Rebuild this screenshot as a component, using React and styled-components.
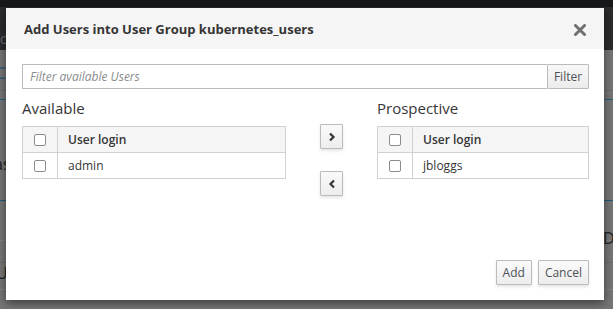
import React from 'react';
import styled, { createGlobalStyle } from 'styled-components';

const GlobalStyle = createGlobalStyle`
  html, body {
    margin: 0;
    padding: 0;
    width: 613px;
    height: 309px;
    overflow: hidden;
    font-family: "Open Sans", "Noto Sans", sans-serif;
    font-size: 12px;
    color: #363636;
  }
`;

const Page = styled.div`
  position: relative;
  width: 613px;
  height: 309px;
  background: #767676;
  overflow: hidden;
`;

const NavTop = styled.div`
  height: 7px;
  background: #17181a;
`;

const NavBar = styled.div`
  height: 43px;
  background: #292b2d;
  color: #6a6a6a;
  font-size: 14px;
  padding: 22px 0 0 0;
  box-sizing: border-box;
`;

const PageLine = styled.div`
  position: absolute;
  left: 0;
  right: 0;
  top: ${(p) => p.top}px;
  height: 1px;
  background: ${(p) => p.color || '#6a6a6a'};
`;

const PageText = styled.div`
  position: absolute;
  top: ${(p) => p.top}px;
  left: ${(p) => p.left}px;
  font-size: 16px;
  color: ${(p) => p.color || '#222'};
`;

const Modal = styled.div`
  position: absolute;
  left: 6px;
  top: 8px;
  width: 598px;
  height: 292px;
  background: #fff;
  box-shadow: 0 3px 9px rgba(0, 0, 0, 0.5);
  display: flex;
  flex-direction: column;
`;

const Header = styled.div`
  height: 41px;
  background: #f5f5f5;
  display: flex;
  align-items: center;
  justify-content: space-between;
  padding: 0 18px 0 18px;
  box-sizing: border-box;
`;

const Title = styled.h4`
  margin: 0;
  font-size: 13px;
  font-weight: 700;
  color: #363636;
`;

const Close = styled.button`
  border: 0;
  background: none;
  padding: 0;
  margin-top: 3px;
  display: flex;
  cursor: pointer;
`;

const Body = styled.div`
  flex: 1;
  padding: 15px 15px 0 16px;
`;

const FilterRow = styled.div`
  display: flex;
  height: 25px;
`;

const FilterInput = styled.input`
  flex: 1;
  border: 1px solid #bbb;
  border-right: 0;
  padding: 0 7px;
  font-family: inherit;
  font-size: 12px;
  outline: none;
  &::placeholder {
    color: #8b8d8f;
    font-style: italic;
  }
`;

const Button = styled.button`
  height: ${(p) => p.h || 25}px;
  padding: 0 ${(p) => p.px ?? 6}px;
  border: 1px solid #bbb;
  border-radius: 1px;
  background: linear-gradient(#fafafa, #ededed);
  box-shadow: 0 2px 3px rgba(3, 3, 3, 0.1);
  font-family: inherit;
  font-size: 12px;
  color: #4d5258;
  display: flex;
  align-items: center;
  justify-content: center;
  cursor: pointer;
`;

const FilterButton = styled(Button)`
  width: 42px;
  box-shadow: none;
  background: linear-gradient(#f7f7f7, #ececec);
`;

const Columns = styled.div`
  display: grid;
  grid-template-columns: 264px 91px 212px;
  margin-top: 9px;
`;

const Column = styled.div`
  display: flex;
  flex-direction: column;
  align-items: ${(p) => (p.center ? 'center' : 'stretch')};
`;

const Label = styled.div`
  font-size: 15px;
  line-height: 20px;
  color: #363636;
  margin-bottom: 8px;
`;

const Table = styled.div`
  border: 1px solid #d1d1d1;
  display: flex;
  flex-direction: column;
`;

const Row = styled.div`
  display: grid;
  grid-template-columns: 34px 1fr;
  height: 25px;
  background: ${(p) => (p.head ? '#f5f5f5' : '#fff')};
  font-weight: ${(p) => (p.head ? 600 : 400)};
  & + & {
    border-top: 1px solid #d1d1d1;
  }
`;

const Cell = styled.div`
  display: flex;
  align-items: center;
  padding-left: ${(p) => (p.check ? 0 : 10)}px;
  justify-content: ${(p) => (p.check ? 'center' : 'flex-start')};
  border-left: ${(p) => (p.check ? '0' : '1px solid #d1d1d1')};
`;

const Check = styled.span`
  width: 10px;
  height: 10px;
  border: 1px solid #8b8d8f;
  border-radius: 2px;
  background: #fff;
  display: block;
`;

const MoveButtons = styled.div`
  margin-top: 26px;
  display: flex;
  flex-direction: column;
  gap: 22px;
`;

const Footer = styled.div`
  display: flex;
  justify-content: flex-end;
  gap: 6px;
  padding: 0 15px 15px 0;
`;

function Chevron({ dir }) {
  return (
    <svg width="8" height="10" viewBox="0 0 8 10">
      <path
        d={dir === 'right' ? 'M2 1.5 L5.5 5 L2 8.5' : 'M6 1.5 L2.5 5 L6 8.5'}
        fill="none"
        stroke="#363636"
        strokeWidth="2.2"
      />
    </svg>
  );
}

function UserTable({ users }) {
  return (
    <Table>
      <Row head>
        <Cell check>
          <Check />
        </Cell>
        <Cell>User login</Cell>
      </Row>
      {users.map((u) => (
        <Row key={u}>
          <Cell check>
            <Check />
          </Cell>
          <Cell>{u}</Cell>
        </Row>
      ))}
    </Table>
  );
}

export default function App() {
  return (
    <Page>
      <GlobalStyle />
      <NavTop />
      <NavBar>c</NavBar>
      <PageText top={62} left={-4} color="#1d5a7a">C</PageText>
      <PageLine top={99} color="#22607f" />
      <PageText top={153} left={-6}>as</PageText>
      <PageLine top={200} color="#1f5b79" />
      <PageLine top={90} color="#6b6b6b" />
      <PageLine top={240} color="#838383" />
      <PageText top={227} left={603}>D</PageText>
      <PageLine top={262} color="#6a6a6a" />
      <PageText top={262} left={-4}>U</PageText>
      <PageLine top={289} color="#838383" />

      <Modal>
        <Header>
          <Title>Add Users into User Group kubernetes_users</Title>
          <Close aria-label="Close">
            <svg width="12" height="12" viewBox="0 0 12 12">
              <path d="M1.5 1.5 L10.5 10.5 M10.5 1.5 L1.5 10.5" stroke="#707070" strokeWidth="3" strokeLinecap="round" />
            </svg>
          </Close>
        </Header>
        <Body>
          <FilterRow>
            <FilterInput placeholder="Filter available Users" />
            <FilterButton>Filter</FilterButton>
          </FilterRow>
          <Columns>
            <Column>
              <Label>Available</Label>
              <UserTable users={['admin']} />
            </Column>
            <Column center>
              <MoveButtons>
                <Button px={0} style={{ width: 23 }}>
                  <Chevron dir="right" />
                </Button>
                <Button px={0} style={{ width: 23 }}>
                  <Chevron dir="left" />
                </Button>
              </MoveButtons>
            </Column>
            <Column>
              <Label>Prospective</Label>
              <UserTable users={['jbloggs']} />
            </Column>
          </Columns>
        </Body>
        <Footer>
          <Button>Add</Button>
          <Button>Cancel</Button>
        </Footer>
      </Modal>
    </Page>
  );
}
